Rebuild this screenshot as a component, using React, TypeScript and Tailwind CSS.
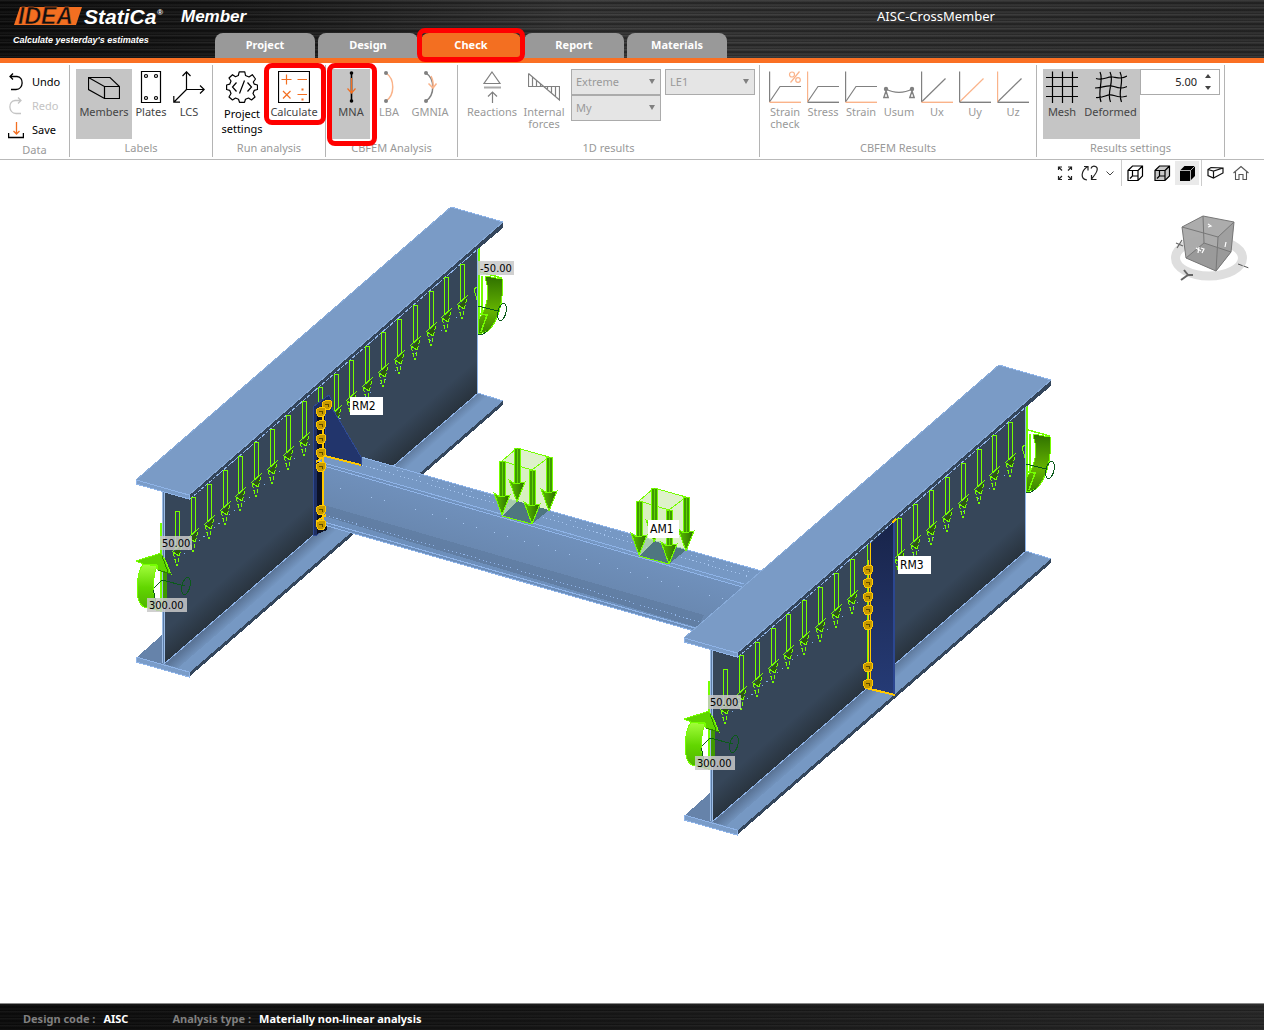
import React, { useState } from "react";

interface RibbonGroupProps {
	title: string;
	className?: string;
	children: React.ReactNode;
}

interface RibbonButtonProps {
	label: string;
	icon: React.ReactNode;
	className?: string;
	active?: boolean;
	disabled?: boolean;
	highlight?: boolean;
	tall?: boolean;
}

interface RibbonSelectProps {
	label: string;
	options: Array<string>;
}

interface IconProps {
	children: React.ReactNode;
}

interface TagProps {
	x: number;
	y: number;
	width: number;
	text: string;
	plain?: boolean;
}

const ORANGE = "#f36f21";
const PALE = "#fab38a";
const GRAY = "#808080";
const EDGE = "#8fb4e8";
const LIME = "#76ff00";
const YELLOW = "#ffc800";

const tabs = ["Project", "Design", "Check", "Report", "Materials"];

const Icon: React.FC<IconProps> = (props) => (
	<svg width="32" height="32" viewBox="0 0 32 32" fill="none" stroke="currentColor" strokeWidth="1.2" className="shrink-0">
		{props.children}
	</svg>
);

/* ---------- ribbon icons ---------- */

const MembersIcon = () => (
	<Icon>
		<path d="M.5 6.500H22L31.500 15.500V27.500H16.500L.5 18.500ZM.5 6.500L16.500 15.500V27.500M16.500 15.500H31.500" />
	</Icon>
);

const PlatesIcon = () => (
	<Icon>
		<path d="M6.500 .5H25.500V31.500H6.500Z" />
		<circle cx="11" cy="5" r="1.500" />
		<circle cx="21" cy="5" r="1.500" />
		<circle cx="11" cy="27" r="1.500" />
		<circle cx="21" cy="27" r="1.500" />
	</Icon>
);

const LcsIcon = () => (
	<Icon>
		<path d="M13.500 1V18.500H31M13.500 18.500L1 31M9.500 5L13.500 .8L17.500 5M27 14.500L31.200 18.500L27 22.500M.8 25V31.200H7" />
	</Icon>
);

const GearIcon = () => (
	<Icon>
		<path d="M13.200 .8H18.800L19.500 4.500L23 6L26.300 3.700L29.500 8L27.300 11L28.300 13.200L31.500 14V18.500L28.300 19.300L27 22.500L29 26L25.500 29L22.500 27L19.500 28.200L18.500 31.300H13.500L12.500 28.200L9.500 27L6.500 29L3 26L5 22.500L3.700 19.300L.6 18.500V14L3.700 13.200L5 10L3 7L6.500 3.700L9.500 5.700L12.300 4.500Z" strokeLinejoin="round" />
		<path d="M10.500 11.500L6.500 16L10.500 20.500M21.500 11.500L25.500 16L21.500 20.500M18.500 9.500L13.500 22.500" />
	</Icon>
);

const CalculateIcon = () => (
	<Icon>
		<path d="M.5 .5H31.500V31.500H.5Z" />
		<path d="M3.500 8.500H13.500M8.500 3.500V13.500M19.500 8.500H29M5 20L12.500 27.500M12.500 20L5 27.500M19.500 23.500H29" stroke={ORANGE} />
		<path d="M23.500 18.500H25.500M23.500 28.500H25.500" stroke={ORANGE} strokeWidth="2" />
	</Icon>
);

const MnaIcon = () => (
	<Icon>
		<path d="M16.500 2V30" stroke="#000" strokeWidth="1.600" />
		<path d="M16.500 7V22M12.500 17.500L16.500 22L20.500 17.500" stroke={ORANGE} />
		<circle cx="16.500" cy="2" r="1.800" fill="#000" stroke="none" />
		<circle cx="16.500" cy="30" r="1.800" fill="#000" stroke="none" />
	</Icon>
);

const LbaIcon = () => (
	<Icon>
		<path d="M13 2C22 8 22 24 13 30" stroke={PALE} strokeWidth="1.500" />
		<circle cx="13" cy="2" r="2" fill={GRAY} stroke="none" />
		<circle cx="13" cy="30" r="2" fill={GRAY} stroke="none" />
	</Icon>
);

const GmniaIcon = () => (
	<Icon>
		<path d="M12 2C21 8 21 24 12 30" stroke={GRAY} strokeWidth="1.500" />
		<path d="M17 5C19 9 19.500 13 19 17M14.500 12.500L19 17L22.500 12.500" stroke={PALE} strokeWidth="1.500" />
		<circle cx="12" cy="2" r="2" fill={GRAY} stroke="none" />
		<circle cx="12" cy="30" r="2" fill={GRAY} stroke="none" />
	</Icon>
);

const ReactionsIcon = () => (
	<Icon>
		<path d="M16 1L24 12.500H8Z" stroke={GRAY} />
		<path d="M8 16.500H25" stroke="#aaa" strokeWidth="2" />
		<path d="M16.500 32V21M12 25.500L16.500 21L21 25.500" stroke={GRAY} />
	</Icon>
);

const ForcesIcon = () => (
	<Icon>
		<path d="M.5 2.500V15.500H31.500V29L.5 2.500M4.500 6V15M8.500 9V15M12.500 13V15M19.500 15V18M23.500 15V22M27.500 15V25" stroke={GRAY} />
	</Icon>
);

const CurveIcon: React.FC<{ vertical?: boolean; percent?: boolean }> = (props) => (
	<Icon>
		<path d="M.5 31L11 15.500H32" stroke={GRAY} />
		<path d="M.5 .5V31" stroke={props.vertical ? PALE : GRAY} strokeWidth="1.400" />
		<path d="M.5 31.300H32" stroke={props.vertical ? GRAY : PALE} strokeWidth="1.400" />
		{props.percent && (
			<g stroke={PALE}>
				<circle cx="23" cy="3.500" r="2.500" />
				<circle cx="29" cy="9" r="2.300" />
				<path d="M30.500 .5L21.500 11.500" />
			</g>
		)}
	</Icon>
);

const AxisIcon: React.FC<{ axis: string }> = (props) => (
	<Icon>
		<path d="M.5 31L24.500 7.500" stroke={props.axis === "y" ? PALE : GRAY} />
		<path d="M.5 .5V31" stroke={props.axis === "z" ? PALE : GRAY} strokeWidth="1.400" />
		<path d="M.5 31.300H32" stroke={props.axis === "x" ? PALE : GRAY} strokeWidth="1.400" />
	</Icon>
);

const UsumIcon = () => (
	<Icon>
		<path d="M3 18C11 22.500 21 22.500 29 18M3 20L.8 26.500H5.200ZM29 20L26.800 26.500H31.200Z" stroke={GRAY} strokeWidth="1.400" />
		<circle cx="3" cy="18" r="2.200" fill={GRAY} stroke="none" />
		<circle cx="29" cy="18" r="2.200" fill={GRAY} stroke="none" />
	</Icon>
);

const MeshIcon = () => (
	<Icon>
		<path d="M6.500 .5V32M16.500 .5V32M26.500 .5V32M0 6.500H32M0 15.500H32M0 25.500H32" stroke="#000" />
	</Icon>
);

const DeformedIcon = () => (
	<Icon>
		<path d="M5 1C9 9 2 20 6 31M15 1C20 11 11 20 15.500 31M25 1C30 11 22 20 26.500 31M1 7.500C9 10 12 5 18 6S27 8 32 5M0 17C9 17 12 13 19 15.500S28 17 32 15.500M1 26.500C10 27 12 22 19 24.500S27 26 32 25" stroke="#000" />
	</Icon>
);

/* ---------- ribbon parts ---------- */

const RibbonGroup: React.FC<RibbonGroupProps> = (props) => (
	<section aria-label={props.title} className={`h-[92px] shrink-0 border-r border-[#b4b4b4] pt-1 ${props.className || ""}`}>
		<div className="flex h-[70px] items-start pl-[6px]">{props.children}</div>
		<h2 className="pt-px text-center leading-4 text-[#999]">{props.title}</h2>
	</section>
);

const RibbonButton: React.FC<RibbonButtonProps> = (props) => (
	<button
		type="button"
		disabled={props.disabled}
		className={`relative flex h-[70px] shrink-0 flex-col items-center pt-[2px] ${props.className || ""} ${props.active ? "bg-[#c5c5c5]" : ""} ${
			props.disabled ? "text-[#999]" : "text-[#444]"
		}`}
	>
		<span className={props.disabled ? "" : "text-black"}>{props.icon}</span>
		<span className={props.tall ? "mt-[3px] leading-[15px] text-black" : "mt-[3px] leading-3"}>{props.label}</span>
		{props.highlight && <span className={`absolute -top-[6px] -right-[7px] -left-[5px] z-10 rounded-lg border-[5px] border-[#f00] ${props.active ? "-bottom-[7px]" : "bottom-[14px]"}`} />}
	</button>
);

const RibbonSelect: React.FC<RibbonSelectProps> = (props) => (
	<div className="relative">
		<select disabled aria-label={props.label} className="block h-[26px] w-[90px] appearance-none border border-[#ababab] bg-[#e5e5e5] pl-1 text-[#999] opacity-100">
			{props.options.map((option) => (
				<option key={option}>{option}</option>
			))}
		</select>
		<svg width="6" height="5" viewBox="0 0 6 5" className="pointer-events-none absolute top-[10px] right-[6px] fill-[#808080]">
			<path d="M0 0H6L3 5Z" />
		</svg>
	</div>
);

const Header: React.FC = () => {
	const [tab, setTab] = useState("Check");

	return (
		<header className="border-b-[5px] border-[#fa7023] bg-[repeating-linear-gradient(180deg,rgba(255,255,255,0.09)_0px,rgba(255,255,255,0)_2px,rgba(0,0,0,0.4)_3px,rgba(255,255,255,0.05)_5px,rgba(0,0,0,0.2)_7px),linear-gradient(90deg,#0b0b0b_0%,#151515_18%,#333_45%,#2b2b2b_100%)] text-white">
			<div className="flex h-[33px] items-center">
				<div className="flex w-[608px] items-center pl-[13px]">
					<svg width="154" height="26" viewBox="0 0 154 26" role="img" aria-label="IDEA StatiCa" className="shrink-0 font-['Liberation_Sans',sans-serif] font-bold italic">
						<path d="M7 3H69L63 21H1Z" fill={ORANGE} />
						<text x="5" y="20" fontSize="23" fill="#111" stroke={ORANGE} strokeWidth="0.500">
							IDEA
						</text>
						<text x="71" y="20" fontSize="21" fill="#fff">
							StatiCa
						</text>
						<text x="144" y="11" fontSize="8" fill="#fff">
							®
						</text>
					</svg>
					<span className="ml-[14px] font-['Liberation_Sans',sans-serif] text-[17px] font-bold italic">Member</span>
				</div>
				<h1 className="flex-1 text-center text-[13px]">AISC-CrossMember</h1>
			</div>
			<div className="flex h-[25px]">
				<p className="w-[215px] pl-[13px] font-['Liberation_Sans',sans-serif] text-[9px] leading-[14px] font-bold italic">Calculate yesterday's estimates</p>
				<nav className="flex gap-[3px]">
					{tabs.map((name) => (
						<button
							type="button"
							key={name}
							onClick={() => setTab(name)}
							className={`relative w-[100px] rounded-t-lg text-[11px] font-bold ${tab === name ? "bg-[#f36f21]" : "bg-[#999]"}`}
						>
							{name}
							{tab === name && <span className="absolute -inset-x-1 -top-[5px] -bottom-[4px] z-10 rounded-lg border-[5px] border-[#f00]" />}
						</button>
					))}
				</nav>
			</div>
		</header>
	);
};

const Ribbon: React.FC = () => {
	const [scale, setScale] = useState(5);

	return (
		<div className="flex h-[97px] border-b border-[#b9b9b9] bg-white pt-[2px]">
			<section aria-label="Data" className="h-[92px] w-[70px] shrink-0 border-r border-[#b4b4b4] pt-[5px]">
				<button type="button" className="flex h-6 items-center gap-2 pl-2 text-black">
					<svg width="16" height="18" viewBox="0 0 16 18" fill="none" stroke="currentColor" strokeWidth="1.300">
						<path d="M2 3.500H9C16 4 16 16 8 16.500H3M5 .5L2 3.500L5 6.500" />
					</svg>
					Undo
				</button>
				<button type="button" disabled className="flex h-6 items-center gap-2 pl-2 text-[#c4c4c4]">
					<svg width="16" height="18" viewBox="0 0 16 18" fill="none" stroke="currentColor" strokeWidth="1.300">
						<path d="M13 3.500H7C0 4 0 16 8 16.500H13M10 .5L13 3.500L10 6.500" />
					</svg>
					Redo
				</button>
				<button type="button" className="flex h-6 items-center gap-2 pl-2 text-black">
					<svg width="16" height="18" viewBox="0 0 16 18" fill="none" stroke="currentColor" strokeWidth="1.300">
						<path d="M.6 12V16.500H15.400V12" />
						<path d="M8.500 1V13M5.500 10L8.500 13L11.500 10" stroke={ORANGE} />
					</svg>
					Save
				</button>
				<h2 className="text-center leading-4 text-[#999]">Data</h2>
			</section>
			<RibbonGroup title="Labels" className="w-[143px]">
				<RibbonButton label="Members" icon={<MembersIcon />} active className="w-14" />
				<RibbonButton label="Plates" icon={<PlatesIcon />} className="w-[38px]" />
				<RibbonButton label="LCS" icon={<LcsIcon />} className="w-[38px]" />
			</RibbonGroup>
			<RibbonGroup title="Run analysis" className="w-[113px]">
				<RibbonButton label="Project settings" icon={<GearIcon />} tall className="w-[46px]" />
				<RibbonButton label="Calculate" icon={<CalculateIcon />} highlight className="ml-1 w-[50px]" />
			</RibbonGroup>
			<RibbonGroup title="CBFEM Analysis" className="w-[132px]">
				<RibbonButton label="MNA" icon={<MnaIcon />} active highlight className="w-[38px]" />
				<RibbonButton label="LBA" icon={<LbaIcon />} disabled className="w-[38px]" />
				<RibbonButton label="GMNIA" icon={<GmniaIcon />} disabled className="w-11" />
			</RibbonGroup>
			<RibbonGroup title="1D results" className="w-[302px]">
				<RibbonButton label="Reactions" icon={<ReactionsIcon />} disabled className="w-14" />
				<RibbonButton label="Internal forces" icon={<ForcesIcon />} disabled className="w-12" />
				<div className="ml-[3px] flex gap-1">
					<div>
						<RibbonSelect label="Result range" options={["Extreme"]} />
						<RibbonSelect label="Internal force" options={["My"]} />
					</div>
					<RibbonSelect label="Load effect" options={["LE1"]} />
				</div>
			</RibbonGroup>
			<RibbonGroup title="CBFEM Results" className="w-[277px]">
				<RibbonButton label="Strain check" icon={<CurveIcon percent />} disabled className="w-[38px]" />
				<RibbonButton label="Stress" icon={<CurveIcon vertical />} disabled className="w-[38px]" />
				<RibbonButton label="Strain" icon={<CurveIcon />} disabled className="w-[38px]" />
				<RibbonButton label="Usum" icon={<UsumIcon />} disabled className="w-[38px]" />
				<RibbonButton label="Ux" icon={<AxisIcon axis="x" />} disabled className="w-[38px]" />
				<RibbonButton label="Uy" icon={<AxisIcon axis="y" />} disabled className="w-[38px]" />
				<RibbonButton label="Uz" icon={<AxisIcon axis="z" />} disabled className="w-[38px]" />
			</RibbonGroup>
			<RibbonGroup title="Results settings" className="w-[188px]">
				<RibbonButton label="Mesh" icon={<MeshIcon />} active className="w-[38px]" />
				<RibbonButton label="Deformed" icon={<DeformedIcon />} active className="w-[59px]" />
				<div className="flex h-[26px] w-20 border border-[#ababab]">
					<input
						aria-label="Deformation scale"
						value={scale.toFixed(2)}
						onChange={(e) => setScale(Number(e.target.value) || 0)}
						className="w-14 text-right text-[#222] outline-none"
					/>
					<div className="flex flex-1 flex-col items-center justify-center gap-2">
						<button type="button" aria-label="Increase" onClick={() => setScale(scale + 1)}>
							<svg width="6" height="4" viewBox="0 0 6 4" className="block fill-[#444]">
								<path d="M0 4H6L3 0Z" />
							</svg>
						</button>
						<button type="button" aria-label="Decrease" onClick={() => setScale(scale - 1)}>
							<svg width="6" height="4" viewBox="0 0 6 4" className="block fill-[#444]">
								<path d="M0 0H6L3 4Z" />
							</svg>
						</button>
					</div>
				</div>
			</RibbonGroup>
		</div>
	);
};

/* ---------- 3D scene ---------- */

const Tag: React.FC<TagProps> = (props) => (
	<g>
		<rect x={props.x} y={props.y} width={props.width} height={props.plain ? 18 : 14} fill={props.plain ? "#fff" : "#c8c8c8"} fillOpacity={props.plain ? 1 : 0.85} />
		<text x={props.x + 2} y={props.y + (props.plain ? 13 : 11)} fontSize={props.plain ? 12 : 11} fill="#000">
			{props.text}
		</text>
	</g>
);

const MomentStart = () => (
	<g>
		<path d="M161 523V612" stroke={LIME} strokeWidth="2" />
		<path d="M165 565V606" stroke="#3f9a00" strokeWidth="4" />
		<path d="M143 564C136 574 134 602 144 607L160 611C152 604 152 577 157 566Z" fill="url(#ribbon)" stroke={LIME} />
		<path d="M136 561L161 553L166 562L171 574L158 570L157 565L143 564Z" fill="#5fd400" stroke={LIME} />
		<path d="M158 570L171 574M162 556L168 572" stroke="#2f8200" />
		<path d="M153 590C157 598 154 603 157 608M162 580L154 588M162 580L185 586" fill="none" stroke="#0b5a1a" />
		<ellipse cx="186" cy="586" rx="4" ry="9" transform="rotate(14 186 586)" fill="none" stroke="#0b5a1a" />
	</g>
);

const MomentEnd = () => (
	<g>
		<path d="M479 248V334M482 276V316" stroke={LIME} strokeWidth="2" />
		<path d="M485 276L502 279C504 302 498 322 488 331L479 334L478 320C488 308 490 290 485 278Z" fill="url(#ribbonDark)" stroke={LIME} />
		<path d="M479 314L487 315L481 332M480 272L502 278" fill="none" stroke={LIME} strokeWidth="1.500" />
		<path d="M478 306L498 311M474 334Q482 337 488 330" fill="none" stroke="#0b5a1a" />
		<ellipse cx="502" cy="312" rx="4" ry="9" transform="rotate(14 502 312)" fill="none" stroke="#0b5a1a" />
	</g>
);

const LineLoad: React.FC<{ skip?: Array<number> }> = (props) => (
	<g strokeWidth="1">
		{Array.from({ length: 19 }, (_, i) => i)
			.filter((i) => !(props.skip || []).includes(i))
			.map((i) => (
				<g key={i} transform={`translate(${Math.round(177 + 15.85 * i)} ${Math.round(511 - 13.75 * i)})`}>
					<path d="M-1.500 37V.5H2.500V34" fill="none" stroke={LIME} />
					<path d="M-3 41L5 34L2 45Z" fill="#2d5a0c" />
					<path d="M-5 41L6 31M-4 41L2 45" fill="none" stroke={LIME} />
					<path d="M-4 42L0 55L5 34" fill="none" stroke={LIME} strokeDasharray="4 2" />
				</g>
			))}
		<path d="M184 554L470 306" stroke="#7fb2ee" strokeDasharray="1 5 1 13" fill="none" />
		<path d="M477 287L474 289L477 300" stroke={LIME} fill="none" />
	</g>
);

const Girder = () => (
	<g>
		{/* bottom flange */}
		<path d="M136 658L163 634L478 393L503 401L189 673Z" fill="#7698c3" />
		<path d="M136 658L163 634V664Z" fill="#6683aa" />
		<path d="M164 664L478 393L492 397L178 668Z" fill="url(#flangeShade)" />
		<path d="M189 673L503 401V405L189 677Z" fill="#34465c" />
		<path d="M136 657L189 672V677L136 662Z" fill="#7a9cc8" stroke={EDGE} />
		<path d="M478 393L503 401" stroke={EDGE} />
		{/* web */}
		<path d="M163 490L478 246V393L164 664Z" fill="url(#web)" />
		<path d="M164 664L478 393" stroke={EDGE} />
		<path d="M162 490H165V663H162Z" fill="#9dbde6" />
		<path d="M163.500 492V663" stroke="#5c7da8" />
		<path d="M477.500 248V393" stroke={EDGE} />
		{/* top flange */}
		<path d="M189 494L503 222V228L478 249L189 500Z" fill="#34465c" />
		<path d="M190 499L479 248" stroke={EDGE} strokeDasharray="4 1" />
		<path d="M136 480L451 207L503 222L189 495Z" fill="#7a9bc6" stroke="#88abd9" />
		<path d="M136 480L189 495V499L136 484Z" fill="#7a9cc8" stroke={EDGE} />
		<path d="M451 207L503 222" stroke={EDGE} />
	</g>
);

const Bolt: React.FC<{ x: number; y: number }> = (props) => (
	<g transform={`translate(${props.x} ${props.y})`}>
		<path d="M-4 -3L0 -5L4 -4L5 1L2 5L-3 4L-5 0Z" fill="#c79a00" stroke={YELLOW} />
		<path d="M-2 0L1 -1M1 -1L1 2" fill="none" stroke="#5e4a00" />
	</g>
);

const CrossBeam = () => (
	<g>
		{/* end plate */}
		<path d="M313 407L329 395L331 399V522L317 535H313Z" fill="#1e2f63" stroke="#2f4a92" />
		<path d="M317 409L327 402V530L317 534Z" fill="#0d1226" />
		{/* web and bottom flange */}
		<path d="M323 460L755 588L700 632L323 522Z" fill="url(#beamWeb)" />
		<path d="M324 505L704 615L698 628L324 518Z" fill="#5a7599" opacity="0.500" />
		<path d="M317 520L324 516L696 627V632L317 523Z" fill="#6d8fbb" />
		<path d="M317 520L695 628M317 523L694 631" stroke={EDGE} />
		<path d="M325 515L700 622" stroke={EDGE} strokeDasharray="1 3" />
		<path d="M340 488L730 601" stroke="#a5c5f0" strokeDasharray="1 13 1 17" />
		{/* top flange */}
		<path d="M317 461L325 455L361 457L765 572L745 588Z" fill="#7698c4" />
		<path d="M361 457L765 572" stroke={EDGE} />
		<path d="M317 461L744 584M317 464L742 587" stroke={EDGE} />
		<path d="M362 465L750 577" stroke="#a5c5f0" strokeDasharray="1 3" />
		<path d="M380 465L750 572" stroke="#a5c5f0" strokeDasharray="1 4 1 12" />
		{/* gusset */}
		<path d="M326 406L332 408L361 457V465L325 456Z" fill="#22356c" stroke="#2f4a92" />
		<path d="M325 456L361 465" stroke={YELLOW} strokeWidth="2" />
		<path d="M323 408V526" stroke={YELLOW} strokeWidth="2" />
		<path d="M316 462L325 455M316 522L326 515" stroke={YELLOW} strokeWidth="2" />
		<Bolt x={327} y={405} />
		{[412, 425, 439, 453, 467, 510, 525].map((y) => (
			<Bolt key={y} x={321} y={y} />
		))}
	</g>
);

const AreaLoad = () => (
	<g>
		<path d="M502 461L517 448L549 457V510L532 524L502 516Z" fill="#b5e08a" fillOpacity="0.450" />
		<path d="M502 461L532 470V524L502 516Z" fill="#cfeeb0" fillOpacity="0.350" />
		<path d="M502 516L517 501L549 510L532 524Z" fill="#4f7680" />
		<path d="M502 461L517 448L549 457L532 470ZM502 516L532 524" fill="none" stroke={LIME} />
		{[
			[517, 448],
			[549, 457],
			[502, 461],
			[532, 470],
		].map(([x, y]) => (
			<g key={x} transform={`translate(${x} ${y})`}>
				<path d="M-2.500 0H3.500V35H-2.500Z" fill="#3f9a00" stroke={LIME} />
				<path d="M.5 0V35" stroke="#5fd400" />
				<path d="M-8 32L-2 36L8 34L0 54Z" fill="url(#head)" stroke={LIME} />
			</g>
		))}
	</g>
);

const Stiffener = () => (
	<g>
		<path d="M870 544L894 522V695L870 688Z" fill="url(#stiff)" />
		<path d="M894 522V695" stroke="#2c4791" strokeWidth="2" />
		<path d="M867.500 545V688" stroke={LIME} />
		<path d="M868.500 560V688M870.500 543V688" stroke={YELLOW} />
		<path d="M866 688L895 695M892 523L896 519" stroke={YELLOW} strokeWidth="2" />
		{[570, 583, 597, 610, 625, 667, 684].map((y) => (
			<Bolt key={y} x={868} y={y} />
		))}
	</g>
);

const Scene = () => (
	<svg viewBox="0 160 1264 843" fill="none" role="img" aria-label="Member model" shapeRendering="crispEdges" className="block h-auto w-full font-['DejaVu_Sans_Condensed','DejaVu_Sans',sans-serif]">
		<defs>
			<linearGradient id="web" gradientUnits="userSpaceOnUse" x1="270" y1="410" x2="370" y2="525">
				<stop offset="0" stopColor="#364659" />
				<stop offset="0.640" stopColor="#364659" />
				<stop offset="0.800" stopColor="#29343f" />
			</linearGradient>
			<linearGradient id="flangeShade" gradientUnits="userSpaceOnUse" x1="320" y1="529" x2="328" y2="538">
				<stop offset="0" stopColor="#5b7598" />
				<stop offset="1" stopColor="#7698c3" />
			</linearGradient>
			<linearGradient id="beamWeb" gradientUnits="userSpaceOnUse" x1="540" y1="520" x2="522" y2="580">
				<stop offset="0" stopColor="#7192be" />
				<stop offset="1" stopColor="#6785ac" />
			</linearGradient>
			<linearGradient id="stiff" x1="0" y1="0" x2="0" y2="1">
				<stop offset="0" stopColor="#18244a" />
				<stop offset="0.500" stopColor="#203060" />
				<stop offset="1" stopColor="#253b76" />
			</linearGradient>
			<linearGradient id="ribbon" x1="0" y1="0" x2="0" y2="1">
				<stop offset="0" stopColor="#a4ff3c" />
				<stop offset="0.500" stopColor="#62d600" />
				<stop offset="1" stopColor="#4db000" />
			</linearGradient>
			<linearGradient id="ribbonDark" x1="0" y1="0" x2="0" y2="1">
				<stop offset="0" stopColor="#2f7000" />
				<stop offset="0.600" stopColor="#64b400" />
				<stop offset="1" stopColor="#3a8400" />
			</linearGradient>
			<linearGradient id="head" x1="0" y1="0" x2="1" y2="0">
				<stop offset="0" stopColor="#5cc400" />
				<stop offset="1" stopColor="#2c6a00" />
			</linearGradient>
		</defs>
		<MomentEnd />
		<Girder />
		<LineLoad />
		<MomentStart />
		<CrossBeam />
		<AreaLoad />
		<g transform="translate(137 40)">
			<AreaLoad />
		</g>
		<g transform="translate(548 158)">
			<MomentEnd />
			<Girder />
			<LineLoad skip={[9, 10]} />
			<MomentStart />
		</g>
		<Stiffener />
		<Tag x={478} y={261} width={36} text="-50.00" />
		<Tag x={160} y={536} width={32} text="50.00" />
		<Tag x={147} y={598} width={40} text="300.00" />
		<Tag x={708} y={695} width={33} text="50.00" />
		<Tag x={695} y={756} width={40} text="300.00" />
		<Tag x={350} y={397} width={33} text="RM2" plain />
		<Tag x={648} y={520} width={31} text="AM1" plain />
		<Tag x={898} y={556} width={33} text="RM3" plain />
	</svg>
);

const NavCube = () => (
	<svg width="80" height="72" viewBox="1170 212 80 72" fill="none" className="absolute top-[52px] right-[14px]">
		<ellipse cx="1209" cy="258" rx="33.500" ry="18" stroke="#dedede" strokeWidth="9" />
		<path d="M1182 227L1203 216L1234 222L1231 252L1216 271L1186 258Z" fill="#a8a8a8" fillOpacity="0.950" />
		<path d="M1218 237L1234 222L1231 252L1216 271Z" fill="#a0a0a0" />
		<path d="M1186 258L1204 243L1231 252L1216 271Z" fill="#9a9a9a" />
		<path d="M1182 227L1203 216L1234 222L1218 237ZM1182 227L1186 258L1216 271L1231 252L1234 222M1218 237L1216 271M1203 216L1204 243L1186 258M1204 243L1231 252" stroke="#777" />
		<path d="M1196 248L1201 251M1199 247L1198 253M1201 248L1204 249L1202 253M1208 224L1211 226L1208 227M1226 242L1225 247" stroke="#fff" strokeWidth="1.200" />
		<path d="M1176 243L1183 246M1182 240L1177 248" stroke="#666" strokeWidth="1.200" />
		<path d="M1181 280L1188 275L1193 275M1184 270L1188 275" stroke="#666" strokeWidth="2" />
		<path d="M1238 264L1249 268" stroke="#555" strokeDasharray="5 1" />
	</svg>
);

const ViewToolbar = () => {
	const wireCube = "M1 5.500L5.500 1H15.500V11L11 15.500H1ZM1 5.500H11V15.500M11 5.500L15.500 1";
	const inner = "M5.500 5.500V11L3 13.500M5.500 11H11";

	return (
		<div className="absolute top-0 right-0 flex h-[26px] items-center pr-[10px]">
			<button type="button" aria-label="Zoom to fit" className="flex h-6 w-6 items-center justify-center">
				<svg width="16" height="16" viewBox="0 0 16 16" fill="none" stroke="#222" strokeWidth="1.200">
					<path d="M1.500 5V2H5M1.500 2L5 5.500M11 2H14.500V5M14.500 2L11 5.500M1.500 11V14.500H5M1.500 14.500L5 11M14.500 11V14.500H11M14.500 14.500L11 11" />
				</svg>
			</button>
			<button type="button" aria-label="Rotate view" className="flex h-6 w-[26px] items-center justify-center">
				<svg width="18" height="16" viewBox="0 0 18 16" fill="none" stroke="#222" strokeWidth="1.200">
					<path d="M6 15C-1 14 0 6 6.500 1.500M3 1.500H7V5.500M10 3.500C11 0 17.500 .5 16 5.500C15.500 8 13 11 10.500 14M10.500 10V14.500H15.500" />
				</svg>
			</button>
			<button type="button" aria-label="View options" className="flex h-6 w-[14px] items-center justify-center">
				<svg width="8" height="5" viewBox="0 0 8 5" fill="none" stroke="#444">
					<path d="M.5 .5L4 4L7.500 .5" />
				</svg>
			</button>
			<div className="ml-1 flex h-[26px] items-center border-x border-[#ccc]">
				<button type="button" aria-label="Wireframe" className="flex h-6 w-[27px] items-center justify-center">
					<svg width="17" height="17" viewBox="0 0 17 17" fill="none" stroke="#000" strokeWidth="1.200">
						<path d={wireCube} />
						<path d={inner} />
					</svg>
				</button>
				<button type="button" aria-label="Transparent" className="flex h-6 w-[26px] items-center justify-center">
					<svg width="17" height="17" viewBox="0 0 17 17" fill="none" stroke="#000" strokeWidth="1.200">
						<path d={wireCube} fill="#c8c8c8" />
						<path d={inner} />
					</svg>
				</button>
				<button type="button" aria-label="Solid" className="mr-[2px] flex h-6 w-6 items-center justify-center bg-[#eaeaea]">
					<svg width="17" height="17" viewBox="0 0 17 17" fill="none">
						<path d="M1 5.500L5.500 1H16V11L11 16H1Z" fill="#000" />
						<path d="M1 5.500H11.500L16 1M11.500 5.500V16" stroke="#ddd" strokeWidth="0.800" />
					</svg>
				</button>
			</div>
			<button type="button" aria-label="Perspective" className="flex h-6 w-[26px] items-center justify-center">
				<svg width="17" height="14" viewBox="0 0 17 14" fill="none" stroke="#111" strokeWidth="1.200">
					<path d="M1 3.500L4 1.500L16 2V7L6.500 12L1 9.500ZM1 3.500L6.500 5L16 2M6.500 5V12" />
				</svg>
			</button>
			<button type="button" aria-label="Home view" className="flex h-6 w-[26px] items-center justify-center">
				<svg width="16" height="16" viewBox="0 0 16 16" fill="none" stroke="#555" strokeWidth="1.100">
					<path d="M.5 8L8 1.500L15.500 8M2.500 7V14.500H6V9.500H10V14.500H13.500V7" />
				</svg>
			</button>
		</div>
	);
};

export default function App() {
	return (
		<div className="flex min-h-screen flex-col bg-white font-['Noto_Sans',sans-serif] text-[11px]">
			<Header />
			<Ribbon />
			<main className="relative flex-1">
				<Scene />
				<ViewToolbar />
				<NavCube />
			</main>
			<footer className="flex h-[27px] items-center gap-11 border-t border-[#888] bg-[repeating-linear-gradient(180deg,rgba(255,255,255,0.07)_0px,rgba(0,0,0,0)_3px,rgba(255,255,255,0.05)_5px,rgba(0,0,0,0.2)_7px),linear-gradient(90deg,#080808_0%,#101010_40%,#222_100%)] pt-1 pl-[23px] font-bold text-white">
				<p className="flex gap-2">
					<span className="text-[#808080]">Design code :</span>
					<span>AISC</span>
				</p>
				<p className="flex gap-2">
					<span className="text-[#808080]">Analysis type :</span>
					<span>Materially non-linear analysis</span>
				</p>
			</footer>
		</div>
	);
}
